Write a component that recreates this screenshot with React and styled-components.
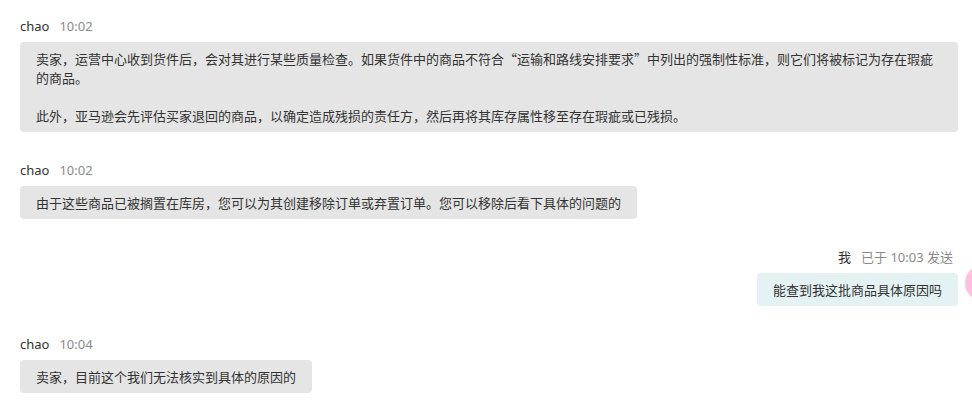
import React from "react";
import styled, { createGlobalStyle } from "styled-components";

const Global = createGlobalStyle`
  html, body { margin: 0; padding: 0; background: #fff; }
  body {
    font-family: "Noto Sans CJK SC", "Noto Sans", sans-serif;
    color: #333;
    overflow: hidden;
  }
`;

const Page = styled.div`
  position: relative;
  width: 972px;
  height: 401px;
  box-sizing: border-box;
  padding: 16px 14px 0 20px;
  display: flex;
  flex-direction: column;
  gap: 28px;
`;

const Message = styled.div`
  display: flex;
  flex-direction: column;
  align-items: ${(p) => (p.$mine ? "flex-end" : "flex-start")};
  gap: 6px;
`;

const Header = styled.div`
  display: flex;
  align-items: center;
  gap: 10px;
  height: 20px;
  font-family: "Noto Sans", "Noto Sans CJK SC", sans-serif;
  font-size: 13px;
  line-height: 20px;
  padding-right: ${(p) => (p.$mine ? "5px" : "0")};
`;

const Name = styled.span`
  color: #333;
`;

const Time = styled.span`
  color: #8a8a8a;
`;

const Bubble = styled.div`
  box-sizing: border-box;
  max-width: 100%;
  padding: 7px 16px;
  border-radius: 4px;
  font-size: 13px;
  line-height: 19px;
  color: #333;
  background: ${(p) => (p.$mine ? "#e4f2f4" : "#e5e5e5")};
`;

const Para = styled.p`
  margin: 0;
  & + & { margin-top: 19px; }
`;

const FloatDot = styled.div`
  position: absolute;
  left: 965px;
  top: 265px;
  width: 36px;
  height: 36px;
  border-radius: 50%;
  background: radial-gradient(circle at center, #fbbfdd 0%, #fbc2df 70%, #fcd6ea 100%);
  filter: blur(0.6px);
`;

const messages = [
  {
    name: "chao",
    time: "10:02",
    paras: [
      "卖家，运营中心收到货件后，会对其进行某些质量检查。如果货件中的商品不符合“运输和路线安排要求”中列出的强制性标准，则它们将被标记为存在瑕疵的商品。",
      "此外，亚马逊会先评估买家退回的商品，以确定造成残损的责任方，然后再将其库存属性移至存在瑕疵或已残损。",
    ],
  },
  {
    name: "chao",
    time: "10:02",
    paras: ["由于这些商品已被搁置在库房，您可以为其创建移除订单或弃置订单。您可以移除后看下具体的问题的"],
  },
  {
    mine: true,
    name: "我",
    time: "已于 10:03 发送",
    paras: ["能查到我这批商品具体原因吗"],
  },
  {
    name: "chao",
    time: "10:04",
    paras: ["卖家，目前这个我们无法核实到具体的原因的"],
  },
];

export default function App() {
  return (
    <>
      <Global />
      <Page>
        {messages.map((m, i) => (
          <Message key={i} $mine={m.mine}>
            <Header $mine={m.mine}>
              <Name>{m.name}</Name>
              <Time>{m.time}</Time>
            </Header>
            <Bubble $mine={m.mine}>
              {m.paras.map((t, j) => (
                <Para key={j}>{t}</Para>
              ))}
            </Bubble>
          </Message>
        ))}
        <FloatDot />
      </Page>
    </>
  );
}
